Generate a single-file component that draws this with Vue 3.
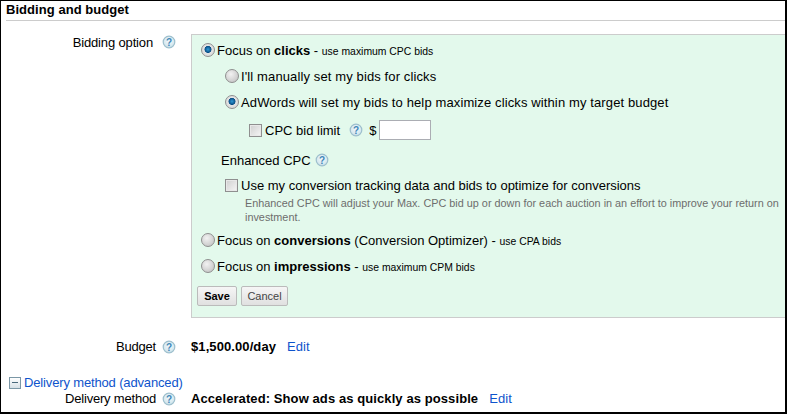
<template>
  <div class="page">
    <h3 class="section-title">Bidding and budget</h3>

    <div class="form-row bidding-row">
      <div class="label-col">
        <span class="bidding-label">Bidding option</span>
        <svg class="help" viewBox="0 0 14 14"><use href="#help-icon" /></svg>
      </div>
      <div class="panel">
        <label class="opt top-opt first">
          <span class="radio on"></span>
          <span>Focus on <b>clicks</b> - <small>use maximum CPC bids</small></span>
        </label>
        <label class="opt sub manual">
          <span class="radio"></span>
          <span>I'll manually set my bids for clicks</span>
        </label>
        <label class="opt sub auto">
          <span class="radio on"></span>
          <span>AdWords will set my bids to help maximize clicks within my target budget</span>
        </label>
        <div class="opt limit">
          <span class="check"></span>
          <span>CPC bid limit</span>
          <svg class="help limit-help" viewBox="0 0 14 14"><use href="#help-icon" /></svg>
          <span class="dollar">$</span>
          <span class="text-input"></span>
        </div>
        <div class="enhanced-title">
          <span>Enhanced CPC</span>
          <svg class="help" viewBox="0 0 14 14"><use href="#help-icon" /></svg>
        </div>
        <div class="opt enhanced-check">
          <span class="check"></span>
          <span>Use my conversion tracking data and bids to optimize for conversions</span>
        </div>
        <p class="hint">Enhanced CPC will adjust your Max. CPC bid up or down for each auction in an effort to improve your return on investment.</p>
        <label class="opt top-opt conversions">
          <span class="radio"></span>
          <span>Focus on <b>conversions</b> (Conversion Optimizer) - <small>use CPA bids</small></span>
        </label>
        <label class="opt top-opt impressions">
          <span class="radio"></span>
          <span>Focus on <b>impressions</b> - <small>use maximum CPM bids</small></span>
        </label>
        <div class="buttons">
          <button class="btn save">Save</button>
          <button class="btn cancel">Cancel</button>
        </div>
      </div>
    </div>

    <div class="form-row budget-row">
      <div class="label-col">
        <span>Budget</span>
        <svg class="help" viewBox="0 0 14 14"><use href="#help-icon" /></svg>
      </div>
      <div class="value"><b>$1,500.00/day</b><a class="edit">Edit</a></div>
    </div>

    <div class="advanced">
      <span class="minus"></span>
      <a>Delivery method (advanced)</a>
    </div>

    <div class="form-row delivery-row">
      <div class="label-col">
        <span>Delivery method</span>
        <svg class="help" viewBox="0 0 14 14"><use href="#help-icon" /></svg>
      </div>
      <div class="value"><b>Accelerated: Show ads as quickly as possible</b><a class="edit">Edit</a></div>
    </div>

    <svg width="0" height="0" class="defs">
      <defs>
        <radialGradient id="help-fill" cx="50%" cy="40%" r="65%">
          <stop offset="0%" stop-color="#f4fafc" />
          <stop offset="70%" stop-color="#d6e8ef" />
          <stop offset="100%" stop-color="#a9c9d6" />
        </radialGradient>
        <g id="help-icon">
          <circle cx="7" cy="7" r="5.8" fill="url(#help-fill)" stroke="#9dbfcd" stroke-width="1.2" />
          <text x="7" y="10.5" text-anchor="middle" font-size="10" font-weight="700" font-family="Liberation Sans, sans-serif" fill="#3f86b8">?</text>
        </g>
      </defs>
    </svg>
  </div>
</template>

<script setup>
</script>

<style>
body {
  margin: 0;
  background: #fff;
}
</style>

<style scoped>
.page {
  box-sizing: border-box;
  width: 787px;
  height: 414px;
  border: 1px solid #000;
  border-width: 1px 2px 2px 1px;
  background: #fff;
  font-family: "Liberation Sans", Arial, sans-serif;
  font-size: 13px;
  color: #000;
  overflow: hidden;
  position: relative;
}

.defs {
  position: absolute;
}

.section-title {
  margin: 0 0 0 5px;
  height: 19px;
  line-height: 17px;
  font-size: 13px;
  font-weight: 700;
  letter-spacing: 0.05px;
  border-bottom: 1px solid #ccc;
}

.form-row {
  display: flex;
}

.label-col {
  box-sizing: border-box;
  width: 190px;
  flex: none;
  display: flex;
  justify-content: flex-end;
  align-items: center;
  height: 15px;
  padding-right: 15px;
  gap: 6px;
  letter-spacing: -0.2px;
}

.help {
  width: 14px;
  height: 14px;
  flex: none;
}

.bidding-row {
  margin-top: 13px;
}

.bidding-row .label-col {
  gap: 9px;
  letter-spacing: -0.15px;
}

.bidding-label {
  padding-top: 2px;
}

.panel {
  box-sizing: border-box;
  flex: 1;
  height: 284px;
  background: #e3f9ec;
  border: 1px solid #ccc;
  border-right: 0;
  padding: 0 0 0 5px;
}

.opt {
  display: flex;
  align-items: center;
  height: 16px;
  gap: 2px;
}

.radio {
  box-sizing: border-box;
  width: 14px;
  height: 14px;
  border-radius: 50%;
  flex: none;
  border: 1px solid #8f8f8f;
  background: radial-gradient(circle at 40% 35%, #f2f2f2, #bdbdbd);
}

.radio.on {
  background: radial-gradient(circle at 50% 45%, #2f9ad6 0, #0a4f86 3.2px, #e4e4e4 3.8px, #d4d4d4 100%);
}

.check {
  box-sizing: border-box;
  width: 13px;
  height: 13px;
  flex: none;
  border: 1px solid #8f8f8f;
  background: linear-gradient(135deg, #cfcfcf, #f6f6f6);
  box-shadow: inset 0 0 0 1px #e8e8e8;
}

small {
  font-size: 10.4px;
}

.first {
  margin-top: 7px;
  margin-left: 4px;
}

.sub {
  margin-left: 28px;
  letter-spacing: 0.12px;
}

.manual {
  margin-top: 10px;
}

.auto {
  margin-top: 10px;
}

.limit {
  margin-top: 12px;
  margin-left: 52px;
  gap: 3px;
}

.limit-help {
  margin-left: 6px;
}

.dollar {
  margin-left: 3px;
}

.text-input {
  box-sizing: border-box;
  width: 52px;
  height: 20px;
  background: #fff;
  border: 1px solid #abadb3;
}

.enhanced-title {
  display: flex;
  align-items: center;
  height: 16px;
  margin-top: 14px;
  margin-left: 24px;
  gap: 4px;
}

.enhanced-check {
  margin-top: 9px;
  margin-left: 28px;
  gap: 3px;
}

.hint {
  margin: 3px 0 0 48px;
  font-size: 10.85px;
  line-height: 14px;
  color: #6d6d6d;
}

.conversions {
  margin-top: 8px;
  margin-left: 4px;
}

.impressions {
  margin-top: 10px;
  margin-left: 4px;
}

.buttons {
  display: flex;
  gap: 4px;
  margin-top: 12px;
}

.btn {
  box-sizing: border-box;
  height: 20px;
  padding: 0;
  font-family: inherit;
  font-size: 11px;
  color: #444;
  border: 1px solid #bbb;
  border-radius: 2px;
  background: linear-gradient(#f6f6f6, #e0e0e0);
}

.save {
  width: 40px;
  font-weight: 700;
  color: #000;
}

.cancel {
  width: 47px;
}

.value {
  display: flex;
  gap: 11px;
  height: 15px;
  align-items: center;
  letter-spacing: 0.09px;
}

.edit,
.advanced a {
  color: #0e54cc;
}

.budget-row {
  margin-top: 21px;
}

.advanced {
  display: flex;
  align-items: center;
  gap: 3px;
  height: 15px;
  margin: 21px 0 0 8px;
  letter-spacing: -0.15px;
}

.minus {
  box-sizing: border-box;
  width: 12px;
  height: 12px;
  flex: none;
  border: 1px solid #7b97a6;
  background: linear-gradient(#fff, #d6e0e6);
  position: relative;
}

.minus::after {
  content: "";
  position: absolute;
  left: 2px;
  right: 2px;
  top: 4px;
  height: 1px;
  background: #4a6a7c;
}

.delivery-row {
  margin-top: 1px;
}
</style>
